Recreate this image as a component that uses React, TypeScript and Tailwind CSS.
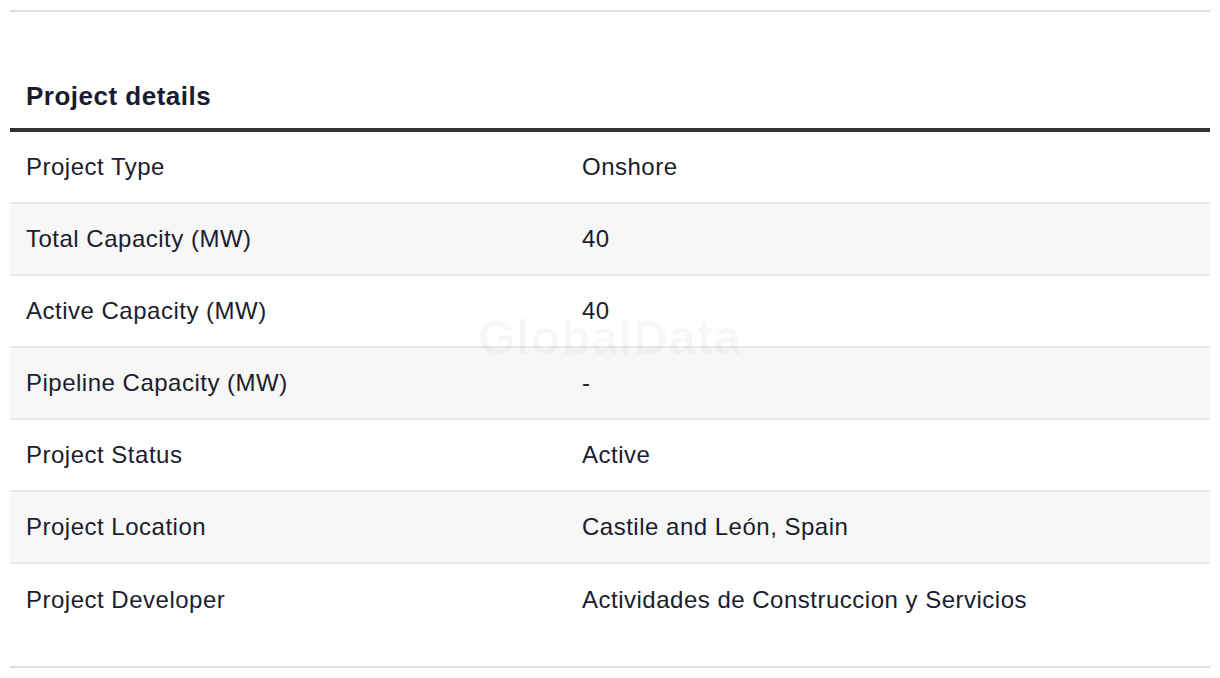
const rows = [
  { label: "Project Type", value: "Onshore" },
  { label: "Total Capacity (MW)", value: "40" },
  { label: "Active Capacity (MW)", value: "40" },
  { label: "Pipeline Capacity (MW)", value: "-" },
  { label: "Project Status", value: "Active" },
  { label: "Project Location", value: "Castile and León, Spain" },
  { label: "Project Developer", value: "Actividades de Construccion y Servicios" },
];

export default function App() {
  return (
    <div className="w-[1220px] h-[678px] bg-white px-[10px] pt-[10px] font-['Liberation_Sans',Arial,sans-serif] tracking-[0.5px] text-[#1c1c2c]">
      <div className="border-t-2 border-[#dedede]" />
      <h2 className="px-4 pt-[68px] pb-[16px] text-[26px] leading-[32px] font-bold text-[#1b1b2e]">
        Project details
      </h2>
      <div className="relative border-t-4 border-[#333333]">
        {rows.map((row, i) => (
          <div
            key={row.label}
            className={`grid grid-cols-[556px_1fr] items-center h-[72px] px-4 text-[24px] ${
              i % 2 === 1 ? "bg-[#f7f7f7]" : "bg-white"
            } ${i < rows.length - 1 ? "border-b-2 border-[#e8e8e8]" : ""}`}
          >
            <span>{row.label}</span>
            <span>{row.value}</span>
          </div>
        ))}
        <div className="pointer-events-none absolute left-[468px] top-[182px] text-[48px] leading-[48px] font-bold tracking-[1px] text-black/[0.03]">
          GlobalData
        </div>
      </div>
      <div className="mt-[30px] border-t-2 border-[#dedede]" />
    </div>
  );
}
